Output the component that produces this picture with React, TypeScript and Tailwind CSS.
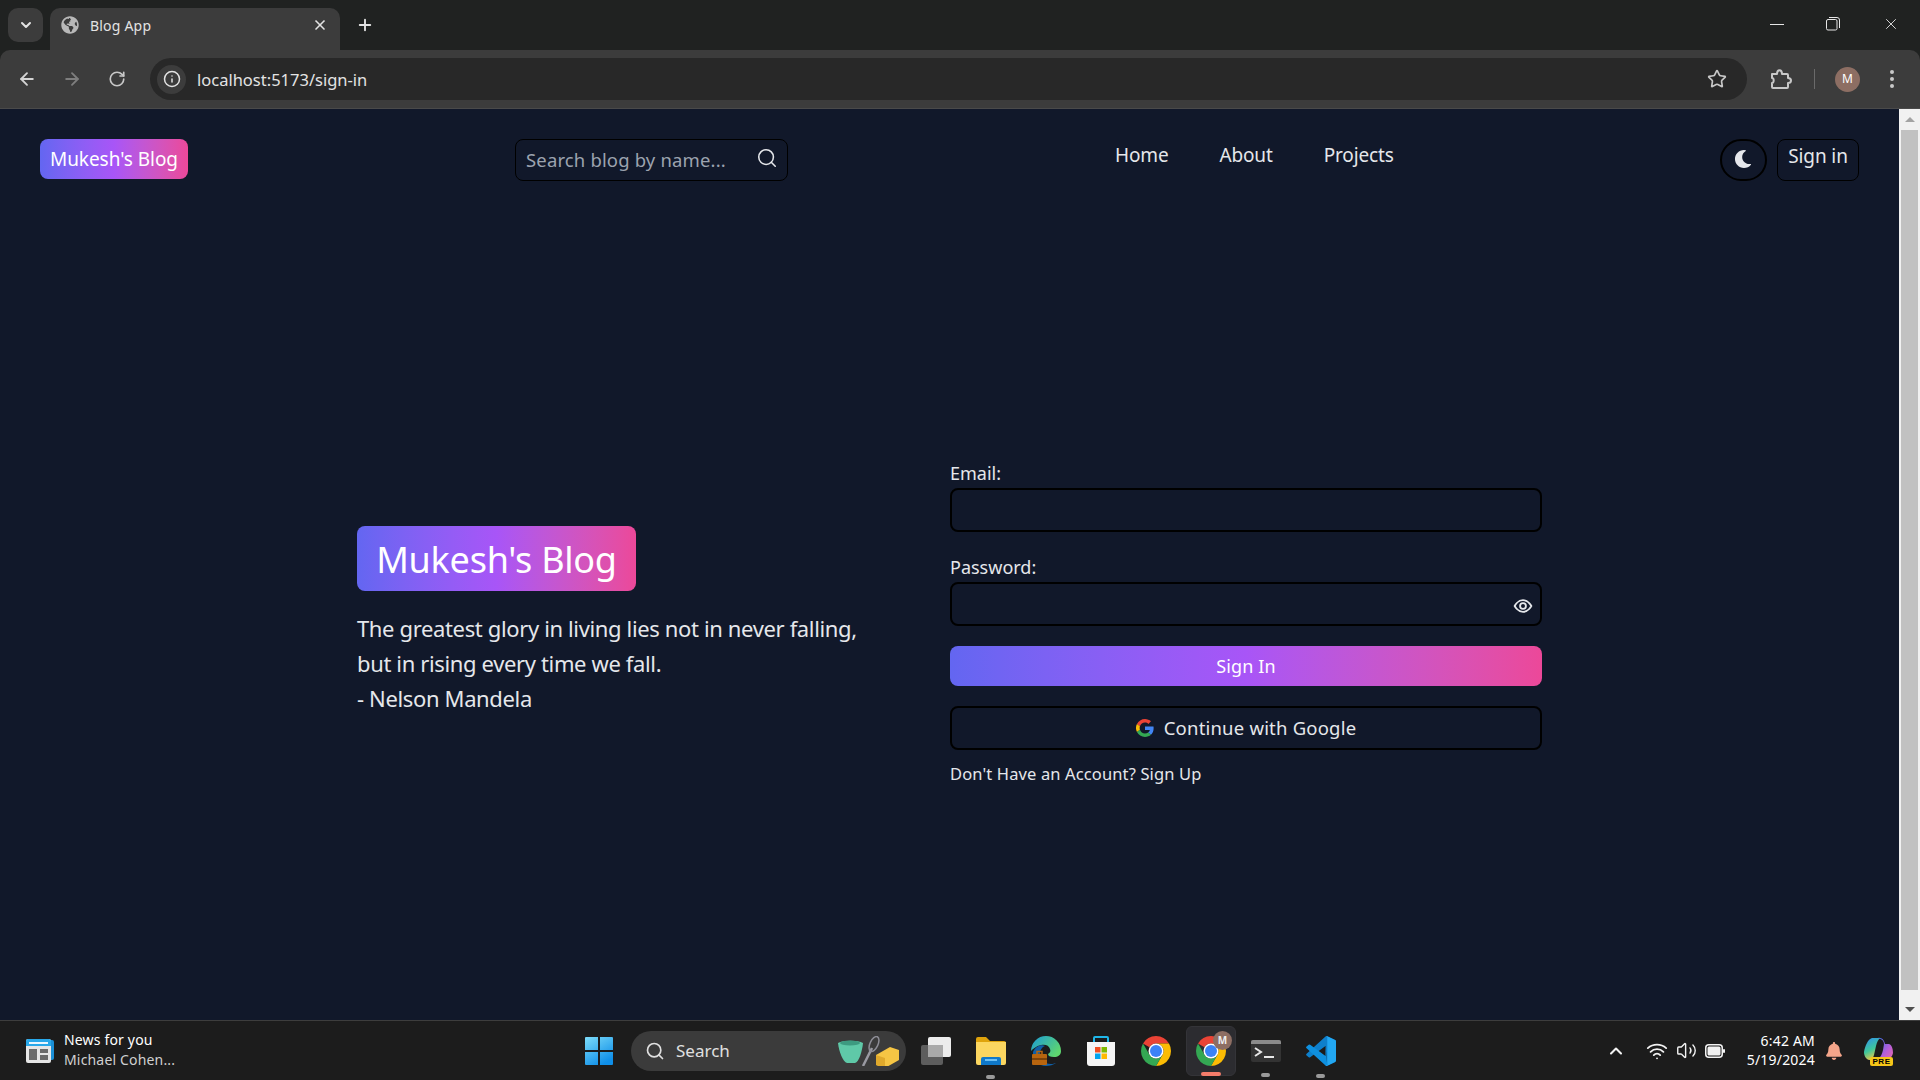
import React from "react";
import { ArrowLeft, ArrowRight, ChevronDown, ChevronUp, Info, Plus, RotateCw, Search, Star, Volume2, Wifi, X } from "lucide-react";
import { FaBell, FaGlobeAmericas, FaMoon } from "react-icons/fa";

const sans = "font-['Noto_Sans','Open_Sans',sans-serif]";
const brand = "bg-gradient-to-r from-[#6366f1] via-[#a855f7] to-[#ec4899]";

function ChromeLogo({ size = 30 }: { size?: number }) {
  return (
    <svg width={size} height={size} viewBox="4 4 40 40">
      <path fill="#ea4335" d="M24 4A20 20 0 0 1 41.32 14H24a10 10 0 0 0-8.66 5L6.68 14A20 20 0 0 1 24 4z" />
      <path fill="#fbbc04" d="M41.32 14A20 20 0 0 1 24 44L32.66 29a10 10 0 0 0-8.66-15z" />
      <path fill="#34a853" d="M6.68 14A20 20 0 0 0 24 44L32.66 29A10 10 0 0 1 15.34 29z" />
      <circle cx="24" cy="24" r="10" fill="#fff" />
      <circle cx="24" cy="24" r="8" fill="#3b82f6" />
    </svg>
  );
}

function GoogleG() {
  return (
    <svg width="18" height="18" viewBox="0 0 48 48">
      <path fill="#ea4335" d="M24 9.500c3.500 0 6.700 1.300 9.100 3.500l6.800-6.800C35.800 2.400 30.300 0 24 0 14.600 0 6.500 5.400 2.600 13.200l7.900 6.200C12.400 13.600 17.700 9.500 24 9.500z" />
      <path fill="#4285f4" d="M47 24.500c0-1.600-.1-3.100-.4-4.500H24v9h13c-.6 3-2.300 5.500-4.800 7.200l7.700 6c4.500-4.200 7.100-10.300 7.100-17.700z" />
      <path fill="#fbbc05" d="M10.500 28.600A14.500 14.500 0 0 1 10.500 19.400l-7.900-6.200a24 24 0 0 0 0 21.600z" />
      <path fill="#34a853" d="M24 48c6.500 0 11.900-2.100 15.900-5.800l-7.700-6c-2.200 1.400-4.900 2.300-8.200 2.300-6.300 0-11.600-4.100-13.500-9.900l-7.900 6.200C6.500 42.600 14.600 48 24 48z" />
    </svg>
  );
}

function EyeIcon() {
  return (
    <svg width="20" height="20" viewBox="0 0 24 24" fill="none" stroke="#e5e7eb" strokeWidth="2.200">
      <path d="M2 12s3.600-7 10-7 10 7 10 7-3.600 7-10 7-10-7-10-7z" />
      <circle cx="12" cy="12" r="3.500" />
    </svg>
  );
}

function ExtensionIcon() {
  return (
    <svg width="22" height="22" viewBox="0 0 22 22" fill="none" stroke="#c8c8c8" strokeWidth="2" strokeLinejoin="round" className="ml-[23px]">
      <path d="M2 6h5c0-5 5-5 5 0h5a1 1 0 0 1 1 1v3c4 0 4 5 0 5v4a1 1 0 0 1-1 1H3a1 1 0 0 1-1-1v-4c2 0 2.500-5 0-5z" />
    </svg>
  );
}

function NewsIcon() {
  return (
    <svg width="28" height="24" viewBox="0 0 28 24">
      <rect x="3" y="1" width="25" height="20" rx="2" fill="#1b8fd6" />
      <rect x="0" y="0" width="25" height="24" rx="2" fill="#e6e6e6" />
      <path d="M0 2a2 2 0 0 1 2-2h21a2 2 0 0 1 2 2v5H0z" fill="#28a8ea" />
      <rect x="3" y="3" width="19" height="2" fill="#e8f6ff" />
      <rect x="3" y="10" width="8" height="11" fill="#6b6b6b" />
      <rect x="14" y="10" width="8" height="4" fill="#6b6b6b" />
      <rect x="14" y="16" width="8" height="5" fill="#6b6b6b" />
    </svg>
  );
}

function WinLogo() {
  return (
    <svg width="30" height="30" viewBox="0 0 30 30">
      <defs>
        <linearGradient id="win" x1="0" y1="0" x2="0.6" y2="1">
          <stop offset="0" stopColor="#7ddcf9" />
          <stop offset="1" stopColor="#0f8fe8" />
        </linearGradient>
      </defs>
      <path fill="url(#win)" d="M1 2a1 1 0 0 1 1-1h12v13H1zM16 1h12a1 1 0 0 1 1 1v12H16zM1 16h13v13H2a1 1 0 0 1-1-1zM16 16h13v12a1 1 0 0 1-1 1H16z" />
    </svg>
  );
}

function BowlArt() {
  return (
    <svg width="62" height="30" viewBox="0 0 62 30">
      <path d="M0 7c5-3 20-3 25 0-1 9-4 19-8 20H9C5 26 1 16 0 7z" fill="#5fc9a8" />
      <ellipse cx="12" cy="7" rx="10" ry="2.500" fill="#3d9a80" />
      <path d="M25 30l9-18" stroke="#9a9aa2" strokeWidth="2.500" />
      <ellipse cx="36" cy="8" rx="4" ry="8" fill="none" stroke="#8d8d96" strokeWidth="1.500" transform="rotate(25 36 8)" />
      <path d="M38 19l14-8 9 3v10l-14 8-9-3z" fill="#f6c544" />
      <path d="M38 19l9 3v10l-9-3z" fill="#e0a92c" />
    </svg>
  );
}

function TaskViewIcon() {
  return (
    <svg width="30" height="28" viewBox="0 0 30 28">
      <rect x="0" y="8" width="22" height="20" rx="2" fill="#5d5d5d" />
      <rect x="7" y="0" width="23" height="20" rx="2" fill="#ececec" />
      <rect x="7" y="8" width="15" height="12" fill="#a9a9a9" />
    </svg>
  );
}

function FolderIcon() {
  return (
    <svg width="30" height="28" viewBox="0 0 30 28">
      <path d="M0 2a2 2 0 0 1 2-2h8l4 4h14a2 2 0 0 1 2 2v4H0z" fill="#dfa30c" />
      <path d="M0 5h30v21a2 2 0 0 1-2 2H2a2 2 0 0 1-2-2z" fill="#fbd660" />
      <path d="M5 22a2 2 0 0 1 2-2h16a2 2 0 0 1 2 2v6H5z" fill="#0f78c9" />
      <rect x="9" y="22" width="12" height="2" fill="#6cc0f5" />
    </svg>
  );
}

function EdgeIcon() {
  return (
    <svg width="30" height="30" viewBox="0 0 30 30">
      <defs>
        <linearGradient id="edgeTop" x1="0" y1="0" x2="1" y2="0.6">
          <stop offset="0" stopColor="#1a9bd8" />
          <stop offset="1" stopColor="#5ed66f" />
        </linearGradient>
      </defs>
      <path d="M0 15A15 15 0 0 1 30 15c0 4-3 6-7 6-4 0-6-1-6-3 2-1 3-3 2-5-1-4-5-5-9-4-5 1-8 4-10 6z" fill="url(#edgeTop)" />
      <path d="M2 16c2-5 8-8 12-6-3 1-5 4-5 8 0 5 4 10 11 10 2 0 3-.5 5-1-3 2-6 3-10 3C8 30 1 24 2 16z" fill="#0f5fa8" />
      <rect x="1" y="18" width="15" height="11" rx="1" fill="#b8650f" />
      <rect x="1" y="22" width="15" height="2" fill="#7d430a" />
      <rect x="6" y="15.500" width="5" height="3" fill="none" stroke="#b8650f" strokeWidth="1.500" />
    </svg>
  );
}

function StoreIcon() {
  return (
    <svg width="30" height="30" viewBox="0 0 30 30">
      <path d="M8 6V2a1 1 0 0 1 1-1h12a1 1 0 0 1 1 1v4" fill="none" stroke="#1fb6e8" strokeWidth="2" />
      <path d="M1 6h28v21a3 3 0 0 1-3 3H4a3 3 0 0 1-3-3z" fill="#f5f5f5" />
      <rect x="9" y="11" width="5.500" height="5.500" fill="#f25022" />
      <rect x="15.500" y="11" width="5.500" height="5.500" fill="#7fba00" />
      <rect x="9" y="17.500" width="5.500" height="5.500" fill="#00a4ef" />
      <rect x="15.500" y="17.500" width="5.500" height="5.500" fill="#ffb900" />
    </svg>
  );
}

function TerminalIcon() {
  return (
    <svg width="30" height="22" viewBox="0 0 30 22">
      <rect width="30" height="22" rx="2" fill="#333" />
      <path d="M2 0h26a2 2 0 0 1 2 2v2H0V2a2 2 0 0 1 2-2z" fill="#8b8b8b" />
      <path d="M4 8l6 4-6 4" fill="none" stroke="#e8e8e8" strokeWidth="2" />
      <rect x="13" y="16" width="10" height="2" fill="#e8e8e8" />
    </svg>
  );
}

function VSCodeIcon() {
  return (
    <svg width="30" height="30" viewBox="0 0 100 100">
      <path d="M71 99l26-12.500a5 5 0 0 0 3-4.500V18a5 5 0 0 0-3-4.500L71 1a5 5 0 0 0-6 1L2 59a4 4 0 0 0 0 6l7 6a4 4 0 0 0 5 0L65 33z" fill="#0e7fcb" />
      <path d="M71 99a5 5 0 0 1-6-1L2 41a4 4 0 0 1 0-6l7-6a4 4 0 0 1 5 0L65 67V32z" fill="#0e90e0" />
      <path d="M71 99a5 5 0 0 1-6-1c2 2 6 1 6-2V4c0-3-4-4-6-2a5 5 0 0 1 6-1l26 12.500a5 5 0 0 1 3 4.500v64a5 5 0 0 1-3 4.500z" fill="#22a7f2" />
    </svg>
  );
}

function BatteryIcon() {
  return (
    <svg width="20" height="14" viewBox="0 0 20 14">
      <rect x="0.750" y="0.750" width="16.500" height="12.500" rx="3" fill="none" stroke="#f2f2f2" strokeWidth="1.500" />
      <rect x="2.500" y="2.500" width="13" height="9" rx="1.500" fill="#f2f2f2" />
      <rect x="18" y="5" width="2" height="4" rx="1" fill="#f2f2f2" />
    </svg>
  );
}

function CopilotIcon() {
  return (
    <div className="relative w-[30px] h-[28px]">
      <svg width="29" height="24" viewBox="0 0 29 24">
        <defs>
          <linearGradient id="copA" x1="0" y1="0" x2="0.4" y2="1">
            <stop offset="0" stopColor="#2f8ff0" />
            <stop offset="0.6" stopColor="#3fc79a" />
            <stop offset="1" stopColor="#e8c84a" />
          </linearGradient>
          <linearGradient id="copB" x1="0" y1="0" x2="1" y2="1">
            <stop offset="0" stopColor="#3a6ee8" />
            <stop offset="0.6" stopColor="#b65fd8" />
            <stop offset="1" stopColor="#e86aa8" />
          </linearGradient>
        </defs>
        <path d="M8 1h9c-3 1-4 4-5 8l-2 9c-1 3-2 5-5 5C2 22 0 19 0 15 1 9 4 2 8 1z" fill="url(#copA)" />
        <path d="M14 1c3-1 6 1 7 6h4c3 1 4 5 4 9-1 4-3 6-7 6h-8c3-2 4-5 5-9l1-6c0-3-2-5-6-6z" fill="url(#copB)" />
      </svg>
      <span className="absolute left-[6px] top-[20px] w-[23px] h-[9px] rounded-[2px] bg-[#f5c518] text-center text-[8px] leading-[9px] font-bold text-black tracking-[0.5px] font-['Liberation_Sans',sans-serif]">PRE</span>
    </div>
  );
}

function BrowserChrome() {
  return (
    <div className={`shrink-0 bg-[#202221] text-[#e3e3e3] ${sans}`}>
      <div className="h-[50px] flex items-end">
        <div className="ml-2 mb-2 w-[35px] h-[34px] rounded-[10px] bg-[#3c3c3c] flex items-center justify-center">
          <ChevronDown size={16} strokeWidth={3} />
        </div>
        <div className="ml-[7px] w-[290px] h-[42px] rounded-t-[10px] bg-[#3c3c3c] flex items-center px-[11px] pb-[8px]">
          <FaGlobeAmericas size={18} className="text-[#b8b8b8]" />
          <span className="ml-[11px] text-[14px] tracking-[0.2px]">Blog App</span>
          <X size={16} strokeWidth={2.5} className="ml-auto mr-[1px]" />
        </div>
        <Plus size={18} strokeWidth={2.5} className="ml-[16px] mb-[16px]" />
        <div className="ml-auto flex items-center h-[50px] pb-[2px]">
          <div className="w-[14px] h-[1px] bg-[#e6e6e6]" />
          <svg width="14" height="14" viewBox="0 0 14 14" fill="none" stroke="#e6e6e6" className="ml-[42px]">
            <rect x="0.500" y="2.500" width="10.500" height="10.500" rx="1.500" />
            <path d="M3 .5h8a2.500 2.500 0 0 1 2.500 2.500v8" />
          </svg>
          <X size={18} strokeWidth={1.2} className="ml-[42px] mr-[20px] text-[#e6e6e6]" />
        </div>
      </div>
      <div className="h-[59px] bg-[#3c3c3c] rounded-t-[10px] border-b border-[#4a4a4a] flex items-center">
        <ArrowLeft size={20} strokeWidth={2.2} className="ml-[17px] text-[#d4d4d4]" />
        <ArrowRight size={20} strokeWidth={2.2} className="ml-[25px] text-[#7e7e7e]" />
        <RotateCw size={18} strokeWidth={2.2} className="ml-[26px] text-[#c8c8c8]" />
        <div className="ml-[24px] w-[1597px] h-[42px] rounded-full bg-[#282828] flex items-center pl-[7px]">
          <div className="w-[29px] h-[29px] rounded-full bg-[#3c3c3c] flex items-center justify-center">
            <Info size={18} strokeWidth={2} />
          </div>
          <span className="ml-[11px] text-[16.500px] pt-[2px]">localhost:5173/sign-in</span>
          <Star size={20} strokeWidth={2} className="ml-auto mr-[20px] text-[#c8c8c8]" />
        </div>
        <ExtensionIcon />
        <div className="ml-[22px] w-[1px] h-[20px] bg-[#6a6a6a]" />
        <div className="ml-[20px] w-[25px] h-[25px] rounded-full bg-[#8d6e63] flex items-center justify-center text-[12px] text-white">M</div>
        <div className="ml-[30px] flex flex-col gap-[3px]">
          <span className="w-[4px] h-[4px] rounded-full bg-[#c8c8c8]" />
          <span className="w-[4px] h-[4px] rounded-full bg-[#c8c8c8]" />
          <span className="w-[4px] h-[4px] rounded-full bg-[#c8c8c8]" />
        </div>
      </div>
    </div>
  );
}

function Navbar() {
  return (
    <div className="h-[72px] pt-[30px] flex items-start text-[#e5e7eb] box-content">
      <div className={`ml-[40px] w-[148px] h-[40px] rounded-[8px] ${brand} text-white text-[19px] tracking-[-0.05px] flex items-center justify-center pt-[1px]`}>
        Mukesh's Blog
      </div>
      <div className="ml-[327px] w-[273px] h-[42px] rounded-[8px] border border-black flex items-center pl-[10px] pr-[9px]">
        <span className="text-[18.500px] tracking-[0.15px] text-[#9ca3af]">Search blog by name...</span>
        <Search size={22} strokeWidth={1.7} className="ml-auto text-[#e5e7eb] mt-[-4px]" />
      </div>
      <nav className="ml-[327px] flex gap-[51px] text-[19px] tracking-[-0.15px] pt-[2px]">
        <span>Home</span>
        <span>About</span>
        <span>Projects</span>
      </nav>
      <div className="ml-auto w-[47px] h-[42px] rounded-full border-2 border-black flex items-center justify-center pb-[2px] pr-[1px]">
        <FaMoon size={18} className="text-[#e5e7eb]" />
      </div>
      <div className="ml-[10px] mr-[40px] w-[82px] h-[42px] rounded-[8px] border border-black flex items-center justify-center text-[19px] tracking-[-0.1px] pb-[7px]">
        Sign in
      </div>
    </div>
  );
}

function SignInForm() {
  return (
    <form className="w-[592px] text-[#e5e7eb]">
      <label className="block h-[28px] text-[18px] leading-[28px] mb-[1px] mt-[-1px]">Email:</label>
      <div className="h-[44px] rounded-[8px] border-2 border-black" />
      <label className="block mt-[21px] h-[28px] text-[18px] leading-[28px]">Password:</label>
      <div className="h-[44px] mt-[1px] rounded-[8px] border-2 border-black flex items-center justify-end pr-[7px] pt-[4px]">
        <EyeIcon />
      </div>
      <button type="button" className={`mt-[20px] w-full h-[40px] rounded-[8px] ${brand} text-white text-[18px] tracking-[0.1px]`}>
        Sign In
      </button>
      <button type="button" className="mt-[20px] w-full h-[44px] rounded-[8px] border-2 border-black flex items-center justify-center gap-[10px] text-[18.500px] tracking-[0.2px]">
        <GoogleG />
        <span>Continue with Google</span>
      </button>
      <p className="mt-[12px] text-[16.500px] tracking-[0.13px]">Don't Have an Account? Sign Up</p>
    </form>
  );
}

function Scrollbar() {
  return (
    <div className="w-[21px] shrink-0 bg-[#f1f1f1] flex flex-col items-center">
      <div className="h-[21px] flex items-center justify-center">
        <div className="w-0 h-0 border-x-[5px] border-x-transparent border-b-[5px] border-b-[#a3a3a3]" />
      </div>
      <div className="w-[17px] h-[860px] bg-[#c1c1c1]" />
      <div className="mt-auto h-[21px] flex items-center justify-center">
        <div className="w-0 h-0 border-x-[5px] border-x-transparent border-t-[5px] border-t-[#505050]" />
      </div>
    </div>
  );
}

function Taskbar() {
  return (
    <div className={`h-[60px] shrink-0 bg-[#1c1c1c] border-t border-[#3d3d3d] flex items-center text-white ${sans}`}>
      <div className="ml-[26px]"><NewsIcon /></div>
      <div className="ml-[10px] w-[120px] text-[14px] leading-[20px] tracking-[0.17px] mt-[-2px] whitespace-nowrap">
        <div>News for you</div>
        <div className="text-[#d0d0d0]">Michael Cohen...</div>
      </div>
      <div className="ml-[400px]"><WinLogo /></div>
      <div className="ml-[17px] w-[275px] h-[40px] rounded-full bg-[#3b3b3b] flex items-center pl-[14px] pr-[6px]">
        <Search size={20} strokeWidth={2} className="text-[#e0e0e0]" />
        <span className="ml-[11px] text-[17px] text-[#e0e0e0]">Search</span>
        <span className="ml-auto"><BowlArt /></span>
      </div>
      <div className="ml-[15px]"><TaskViewIcon /></div>
      <div className="ml-[25px] relative">
        <FolderIcon />
        <span className="absolute left-[10px] top-[38px] w-[9px] h-[4px] rounded-full bg-[#9a9a9a]" />
      </div>
      <div className="ml-[25px]"><EdgeIcon /></div>
      <div className="ml-[25px]"><StoreIcon /></div>
      <div className="ml-[25px]"><ChromeLogo /></div>
      <div className="ml-[15px] w-[50px] h-[50px] rounded-[6px] bg-[#2c2c30] border border-[#343438] flex items-center justify-center relative">
        <ChromeLogo />
        <span className="absolute left-[26px] top-[4px] w-[19px] h-[19px] rounded-full bg-[#8d6e63] text-[10px] font-bold leading-[19px] text-center text-[#eee]">M</span>
        <span className="absolute left-[14px] top-[45px] w-[20px] h-[4px] rounded-full bg-[#f47c6a]" />
      </div>
      <div className="ml-[15px] relative">
        <TerminalIcon />
        <span className="absolute left-[10px] top-[33px] w-[9px] h-[4px] rounded-full bg-[#9a9a9a]" />
      </div>
      <div className="ml-[25px] relative">
        <VSCodeIcon />
        <span className="absolute left-[10px] top-[38px] w-[9px] h-[4px] rounded-full bg-[#9a9a9a]" />
      </div>
      <ChevronUp size={20} strokeWidth={2.5} className="ml-[270px] text-[#f2f2f2]" />
      <Wifi size={22} strokeWidth={2} className="ml-[20px] text-[#f2f2f2]" />
      <Volume2 size={21} strokeWidth={1.6} className="ml-[8px] text-[#f2f2f2]" />
      <span className="ml-[8px]"><BatteryIcon /></span>
      <div className="ml-[13px] w-[77px] text-right text-[14px] leading-[19px] tracking-[0.2px] whitespace-nowrap mt-[-2px]">
        <div>6:42 AM</div>
        <div>5/19/2024</div>
      </div>
      <FaBell size={18} className="ml-[10px] text-[#f4a58a]" />
      <span className="ml-[21px]"><CopilotIcon /></span>
    </div>
  );
}

export default function App() {
  return (
    <div className="h-screen w-full overflow-hidden flex flex-col bg-[#11182a]">
      <BrowserChrome />
      <div className="flex-1 min-h-0 flex">
        <main className={`flex-1 min-w-0 flex flex-col ${sans}`}>
          <Navbar />
          <div className="flex pl-[357px] pt-[249px]">
            <div className="w-[593px] pt-[66px] text-[#e5e7eb]">
              <div className={`w-[279px] h-[65px] rounded-[8px] ${brand} text-white text-[36px] tracking-[-0.25px] flex items-center justify-center pt-[2px]`}>
                Mukesh's Blog
              </div>
              <p className="mt-[20px] text-[22px] leading-[35px] tracking-[-0.36px]">
                The greatest glory in living lies not in never falling,
                <br />
                but in rising every time we fall.
                <br />- Nelson Mandela
              </p>
            </div>
            <SignInForm />
          </div>
        </main>
        <Scrollbar />
      </div>
      <Taskbar />
    </div>
  );
}
